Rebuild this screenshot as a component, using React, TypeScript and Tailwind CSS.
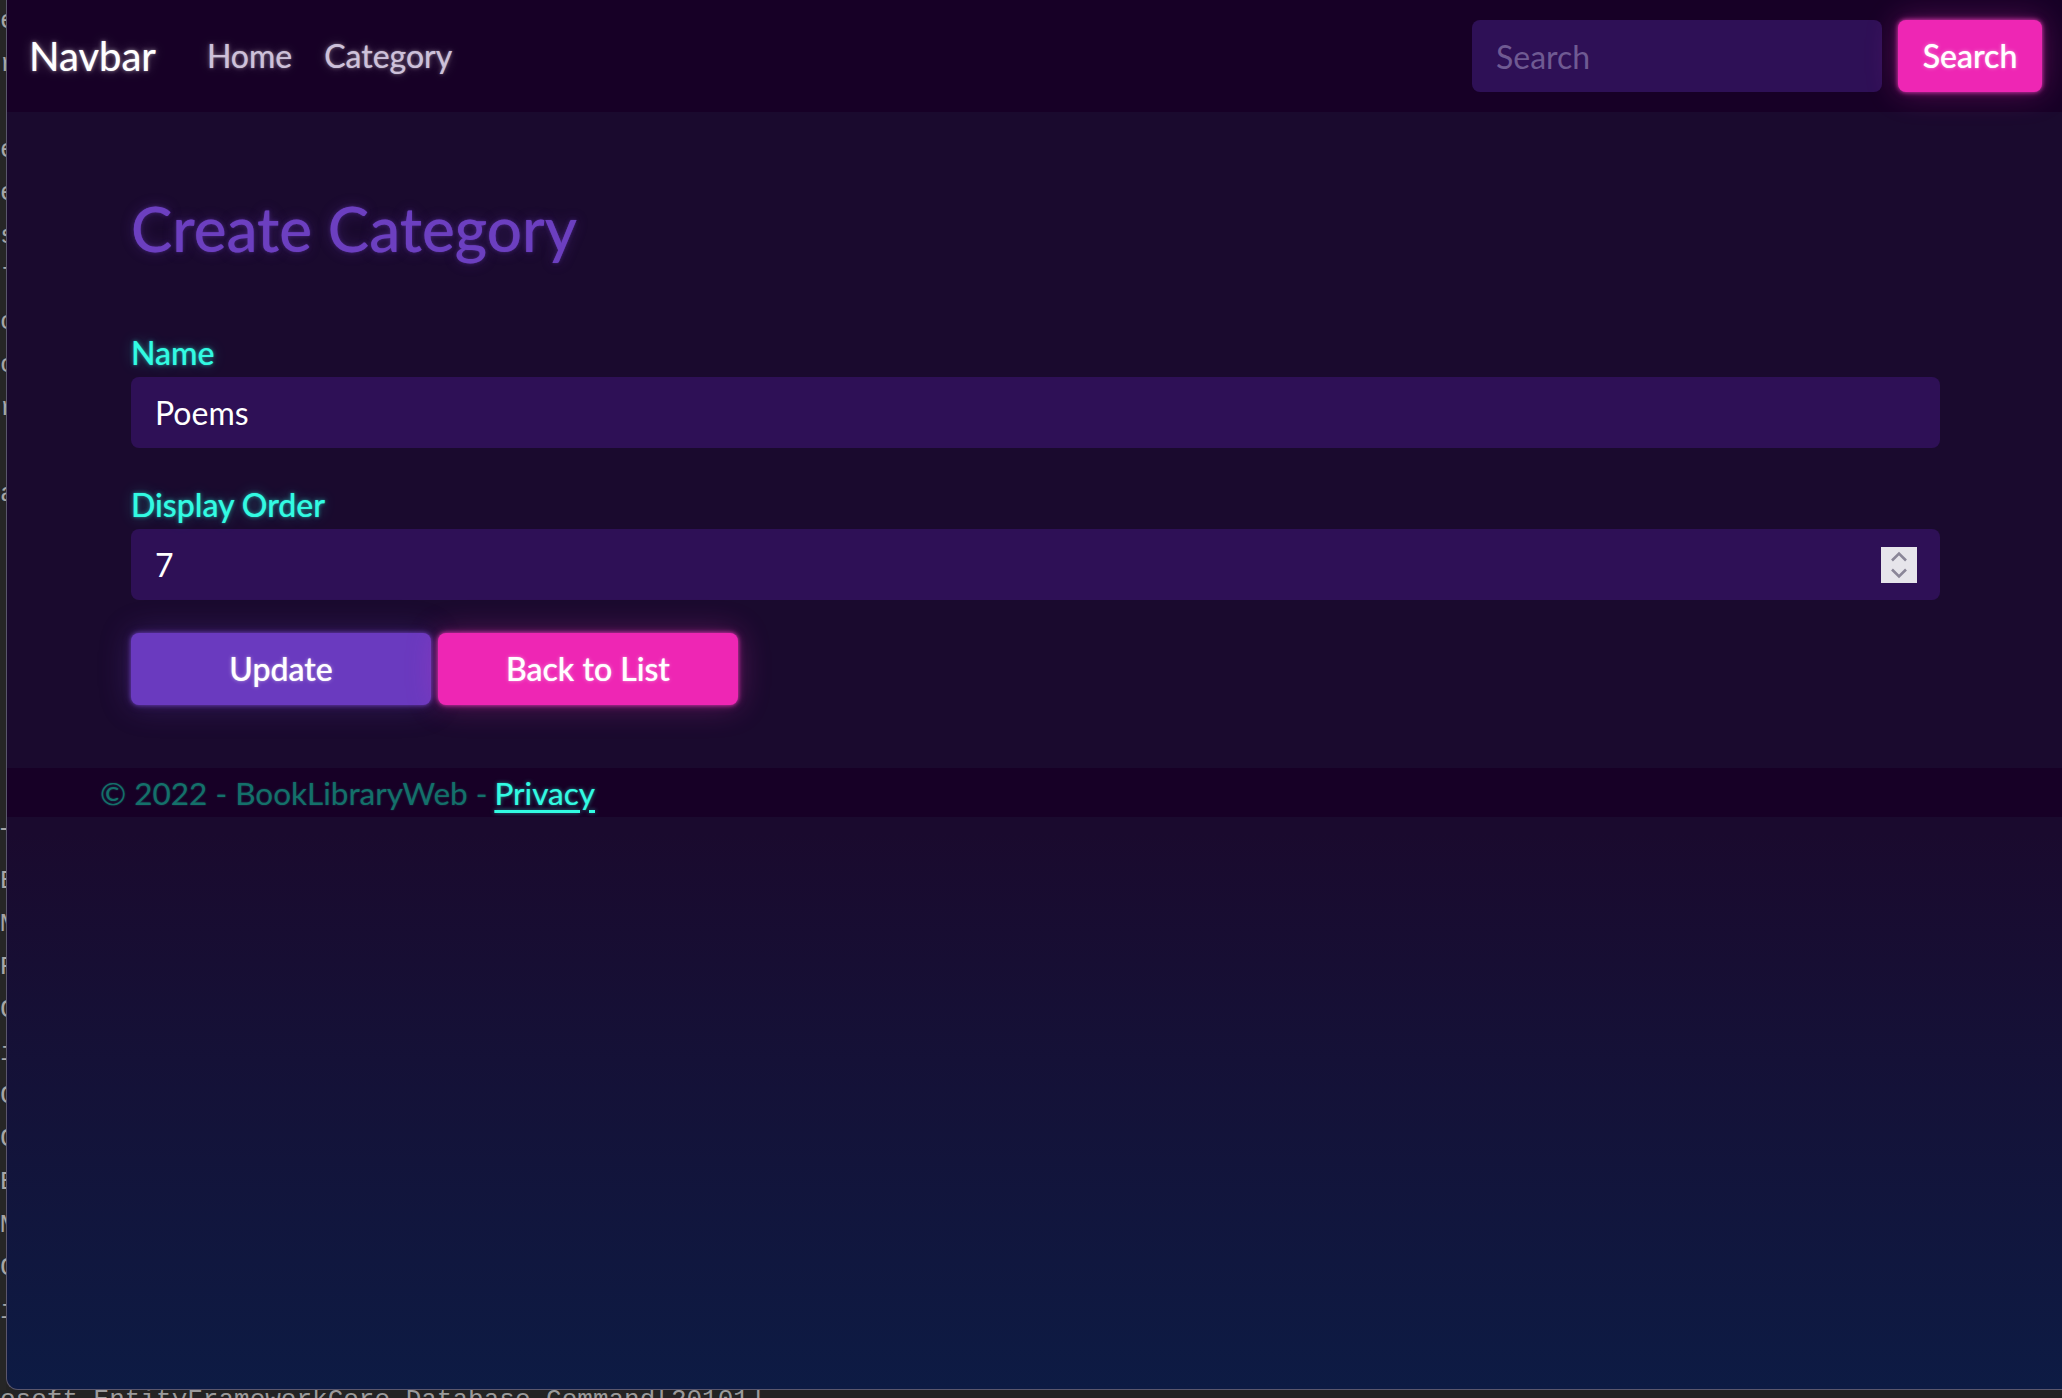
import React from "react";

const termChars = ["e", "r", "", "e", "e", "s", "l", "c", "c", "r", "", "a", "", "", "", "", "", "", "", "T", "E", "M", "R", "C", "i", "C", "C", "E", "M", "C", "i", ""];

function TermStrip() {
  return (
    <div className="w-[6px] shrink-0 bg-[#262626] overflow-hidden flex flex-col [font-family:'Liberation_Mono',monospace] text-[26px] text-[#a6a6a6]">
      {termChars.map((c, i) => (
        <div key={i} className="h-[43px] leading-[43px] whitespace-pre">
          {c || " "}
        </div>
      ))}
    </div>
  );
}

function Spinner() {
  return (
    <div className="w-[36px] h-[36px] bg-[#e6e5eb] shrink-0">
      <svg width="36" height="36" viewBox="0 0 36 36" fill="none">
        <path d="M11 13.5 L18 6.5 L25 13.5" stroke="#8a8698" strokeWidth="2.6" />
        <path d="M11 22.5 L18 29.5 L25 22.5" stroke="#8a8698" strokeWidth="2.6" />
      </svg>
    </div>
  );
}

export default function App() {
  return (
    <div className="w-[2062px] h-[1398px] bg-[#232323] flex flex-col overflow-hidden [font-family:Lato,sans-serif]">
      <div className="flex flex-1 min-h-0">
        <TermStrip />
        <div className="flex-1 flex flex-col rounded-bl-[12px] border-l border-b border-[#5a566c] overflow-hidden bg-[linear-gradient(180deg,#1a0a2e_0%,#1a0a2e_60%,#0d1b44_100%)]">
          <nav className="h-[112px] shrink-0 bg-[#170026] flex items-center pl-[22px] pr-[20px]">
            <span className="text-[40px] leading-[48px] text-white [text-shadow:0_0_1px_rgba(255,255,255,0.6),0_0_4px_rgba(255,255,255,0.45),0_0_12px_rgba(255,255,255,0.25)]">
              Navbar
            </span>
            <div className="flex items-center ml-[51px] gap-[32px] text-[32px] leading-[48px] text-[#cdc1da] [text-shadow:0_0_1px_rgba(255,255,255,0.5),0_0_4px_rgba(255,255,255,0.35),0_0_12px_rgba(255,255,255,0.2)]">
              <span>Home</span>
              <span>Category</span>
            </div>
            <div className="flex-1" />
            <input
              placeholder="Search"
              className="w-[410px] h-[72px] rounded-[8px] bg-[#2e1056] pl-[24px] text-[32px] text-white placeholder:text-[#6f5a92] outline-none"
            />
            <button className="ml-[16px] w-[144px] h-[72px] rounded-[8px] bg-[#ee26b4] text-white text-[32px] font-medium shadow-[0_0_4px_rgba(234,57,184,0.9),0_0_8px_rgba(234,57,184,0.4),0_0_32px_rgba(234,57,184,0.3)] [text-shadow:0_0_1px_rgba(255,255,255,0.7),0_0_4px_rgba(255,255,255,0.4)]">
              Search
            </button>
          </nav>

          <main className="pt-[79px] pb-[63px] pl-[124px] pr-[122px]">
            <h2 className="text-[62px] leading-[74px] font-medium text-[#6c3fc0] [text-shadow:0_0_1px_rgba(111,66,193,0.6),0_0_4px_rgba(111,66,193,0.4),0_0_14px_rgba(111,66,193,0.3)]">
              Create Category
            </h2>
            <div className="mt-[69px]">
              <label className="block text-[32px] leading-[38px] mb-[5px] font-medium text-[#32fbe2] [text-shadow:0_0_1px_rgba(50,251,226,0.6),0_0_4px_rgba(50,251,226,0.5),0_0_14px_rgba(50,251,226,0.3)]">
                Name
              </label>
              <input
                readOnly
                value="Poems"
                className="w-full h-[71px] rounded-[8px] bg-[#2e1056] pl-[24px] text-[32px] text-white outline-none"
              />
            </div>
            <div className="mt-[38px]">
              <label className="block text-[32px] leading-[38px] mb-[5px] font-medium text-[#32fbe2] [text-shadow:0_0_1px_rgba(50,251,226,0.6),0_0_4px_rgba(50,251,226,0.5),0_0_14px_rgba(50,251,226,0.3)]">
                Display Order
              </label>
              <div className="w-full h-[71px] rounded-[8px] bg-[#2e1056] pl-[24px] pr-[23px] flex items-center">
                <span className="flex-1 text-[32px] leading-[38px] text-white">7</span>
                <Spinner />
              </div>
            </div>
            <div className="mt-[33px] flex gap-[7px]">
              <button className="w-[300px] h-[72px] rounded-[8px] bg-[#6a3abf] text-white text-[32px] font-medium shadow-[0_0_4px_rgba(111,66,193,0.9),0_0_8px_rgba(111,66,193,0.4),0_0_32px_rgba(111,66,193,0.3)] [text-shadow:0_0_1px_rgba(255,255,255,0.7),0_0_4px_rgba(255,255,255,0.4)]">
                Update
              </button>
              <button className="w-[300px] h-[72px] rounded-[8px] bg-[#ee26b4] text-white text-[32px] font-medium shadow-[0_0_4px_rgba(234,57,184,0.9),0_0_8px_rgba(234,57,184,0.4),0_0_32px_rgba(234,57,184,0.3)] [text-shadow:0_0_1px_rgba(255,255,255,0.7),0_0_4px_rgba(255,255,255,0.4)]">
                Back to List
              </button>
            </div>
          </main>

          <footer className="h-[49px] shrink-0 bg-[#170026] pl-[93px] flex items-center text-[31.5px] leading-[40px] whitespace-pre">
            <span className="text-[#14706a] [text-shadow:0_0_2px_rgba(20,112,106,0.6)]">© 2022 - BookLibraryWeb - </span>
            <span className="-ml-[1px] text-[#32fbe2] underline underline-offset-[5px] [text-shadow:0_0_1px_rgba(50,251,226,0.6),0_0_4px_rgba(50,251,226,0.5)]">
              Privacy
            </span>
          </footer>
        </div>
      </div>
      <div className="h-[8px] shrink-0 overflow-hidden">
        <div className="-mt-[3px] whitespace-pre text-[26px] leading-none text-[#9a9a9a] [font-family:'Liberation_Mono',monospace]">
          osoft.EntityFrameworkCore.Database.Command[20101]
        </div>
      </div>
    </div>
  );
}
